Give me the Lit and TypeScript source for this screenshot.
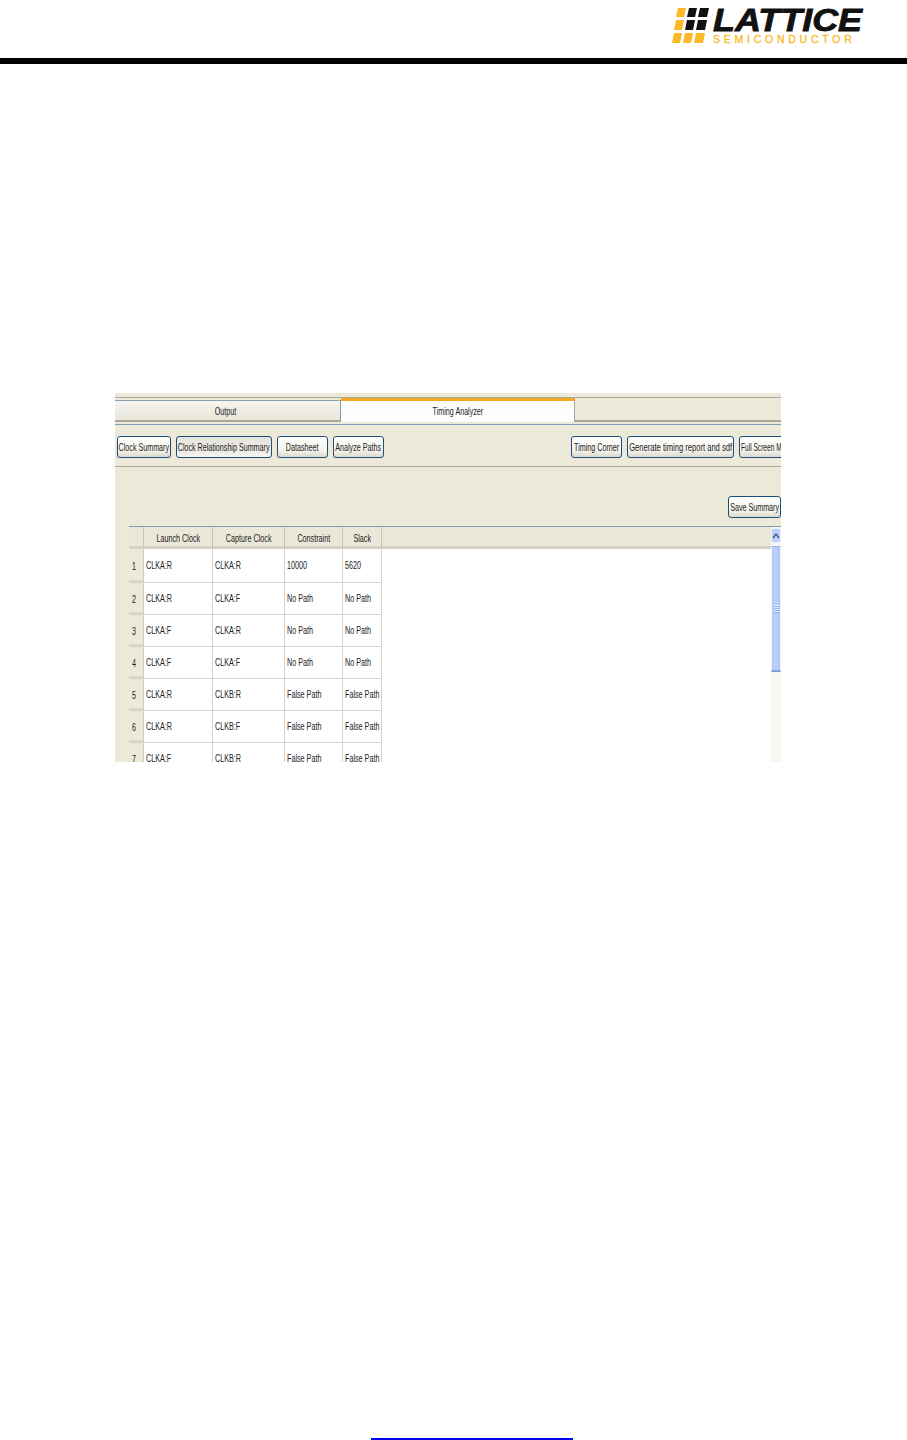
import { LitElement, html, css } from "lit";
import { customElement } from "lit/decorators.js";

const ROWS = [
  ["1", "CLKA:R", "CLKA:R", "10000", "5620"],
  ["2", "CLKA:R", "CLKA:F", "No Path", "No Path"],
  ["3", "CLKA:F", "CLKA:R", "No Path", "No Path"],
  ["4", "CLKA:F", "CLKA:F", "No Path", "No Path"],
  ["5", "CLKA:R", "CLKB:R", "False Path", "False Path"],
  ["6", "CLKA:R", "CLKB:F", "False Path", "False Path"],
  ["7", "CLKA:F", "CLKB:R", "False Path", "False Path"],
];

@customElement("app-root")
export class AppRoot extends LitElement {
  static styles = css`
    :host { display: block; width: 907px; height: 1440px; background: #fff; overflow: hidden; position: relative; font-family: "Liberation Sans", Arial, sans-serif; color: #222; }
    .header { height: 58px; display: flex; justify-content: flex-end; box-sizing: border-box; padding: 7px 35px 0 0; }
    .logo { width: 200px; height: 38px; display: block; }
    .rule { height: 6px; background: #000; }
    .panel { margin: 329px 0 0 115px; width: 666px; height: 369px; background: #ece9d8; overflow: hidden; display: flex; flex-direction: column; }
    .sq { display: inline-block; white-space: nowrap; transform: scaleX(0.65); }
    .tabs { margin-top: 4px; height: 28px; flex: none; box-sizing: border-box; border-top: 1px solid #aca899; border-bottom: 1px solid #7f9db9; display: flex; }
    .tab { display: flex; align-items: center; justify-content: center; font-size: 11px; box-sizing: border-box; }
    .tab.off { width: 226px; height: 22px; margin-top: 2px; padding-right: 4px; background: linear-gradient(#f6f5f0, #e8e6da); border-top: 1px solid #8aa0ae; border-right: 1px solid #8a9a9a; border-bottom: 2px solid #aca899; }
    .tab.on { width: 234px; height: 24px; background: #fdfdfd; border-top: 3px solid #f5a623; border-right: 1px solid #aca899; padding-bottom: 2px; }
    .tab.fill { flex: 1; height: 24px; border-bottom: 2px solid #aca899; }
    .tools { height: 42px; box-sizing: border-box; border-bottom: 1px solid #aca899; display: flex; align-items: center; padding: 2px 0 0 2px; gap: 5px; flex: none; }
    .spacer { flex: 1; }
    .btn { height: 22px; flex: none; box-sizing: border-box; border: 1px solid #1c4f80; border-radius: 3px; background: linear-gradient(#fff, #f3f2ea 70%, #dcd8cc); display: flex; align-items: center; justify-content: center; font-size: 11px; }
    .btn.act { background: linear-gradient(#e6e4dc, #ecebe5 70%, #f4f3ee); }
    .w54 { width: 54px; }
    .w96 { width: 96px; }
    .w51 { width: 51px; }
    .w53 { width: 53px; }
    .w107 { width: 107px; }
    .w107 .sq { transform: scaleX(0.69); }
    .clip { width: 48px; margin-right: -6px; justify-content: flex-start; }
    .clip .sq { transform-origin: left center; transform: scaleX(0.6); margin-left: 1px; }
    .save { display: flex; justify-content: flex-end; padding-top: 29px; height: 59px; box-sizing: border-box; flex: none; }
    .tablewrap { flex: 1; min-height: 0; margin-left: 14px; border-top: 1px solid #7f9db9; display: flex; overflow: hidden; }
    .table { flex: 1; display: grid; grid-template-columns: 15px 69px 72px 58px 39px 1fr; grid-auto-rows: 32px; grid-template-rows: 22px 34px; background: #fff; overflow: hidden; font-size: 10px; align-content: start; }
    .th { background: #ebe8d9; border-bottom: 3px solid #d6d2c2; border-right: 1px solid #c8c5b4; display: flex; align-items: center; justify-content: center; box-sizing: border-box; padding-top: 3px; }
    .th .sq { transform: scaleX(0.72); }
    .th.last { border-right: 0; }
    .rh { background: #ece9d8; border-right: 1px solid #cfccbb; border-bottom: 3px solid #d8d5c6; box-sizing: border-box; display: flex; align-items: center; padding: 3px 0 0 3px; font-size: 10px; }
    .td { border-right: 1px solid #d6d3c8; border-bottom: 1px solid #d6d3c8; box-sizing: border-box; display: flex; align-items: center; padding-left: 2px; }
    .td .sq, .rh .sq { transform-origin: left center; transform: scaleX(0.72); }
    .blank { background: #fff; }
    .scroll { width: 10px; flex: none; background: #f8f7f2; display: flex; flex-direction: column; gap: 3px; padding-top: 1px; }
    .sb-up { height: 15px; flex: none; background: #bcd0fb; border: 1px solid #eef3ff; box-sizing: border-box; border-radius: 2px; display: flex; align-items: center; justify-content: center; }
    .thumb { height: 126px; flex: none; background: linear-gradient(90deg, #b6cbf9, #bdd0fb 50%, #aec4f4); border: 1px solid #eef3ff; border-top-color: #9db7e8; border-bottom: 2px solid #7f9fdc; box-sizing: border-box; display: flex; align-items: center; justify-content: center; }
    .grip { width: 5px; height: 8px; background: repeating-linear-gradient(#e4ecff 0 1px, #93aeea 1px 2px); }
    .link { position: absolute; left: 371px; top: 1438px; width: 202px; height: 2px; background: #0000f0; }
  `;

  render() {
    return html`
      <div class="header">
        <svg class="logo" viewBox="0 0 200 38" xmlns="http://www.w3.org/2000/svg">
          <g>
            <polygon points="6,1 14,1 12,10 4,10" fill="#fdb827"/>
            <polygon points="17,1 25,1 23,10 15,10" fill="#111"/>
            <polygon points="28,1 37,1 35,10 26,10" fill="#111"/>
            <polygon points="4,13 12,13 10,23 2,23" fill="#fdb827"/>
            <polygon points="15,13 23,13 21,23 13,23" fill="#111"/>
            <polygon points="26,13 35,13 33,23 24,23" fill="#111"/>
            <polygon points="2,26 10,26 8,36 0,36" fill="#fdb827"/>
            <polygon points="13,26 21,26 19,36 11,36" fill="#fdb827"/>
            <polygon points="24,26 33,26 31,36 22,36" fill="#fdb827"/>
          </g>
          <text transform="translate(41 23.5) scale(1.16 1)" font-family="Liberation Sans" font-weight="700" font-style="italic" font-size="31" fill="#111" stroke="#111" stroke-width="0.8">LATTICE</text>
          <text x="41" y="36" font-family="Liberation Sans" font-size="10.5" fill="#fdb827" stroke="#fdb827" stroke-width="0.3" letter-spacing="3.75">SEMICONDUCTOR</text>
        </svg>
      </div>
      <div class="rule"></div>
      <div class="panel">
        <div class="tabs">
          <div class="tab off"><span class="sq">Output</span></div>
          <div class="tab on"><span class="sq">Timing Analyzer</span></div>
          <div class="tab fill"></div>
        </div>
        <div class="tools">
          <div class="btn w54"><span class="sq">Clock Summary</span></div>
          <div class="btn act w96"><span class="sq">Clock Relationship Summary</span></div>
          <div class="btn w51"><span class="sq">Datasheet</span></div>
          <div class="btn w51"><span class="sq">Analyze Paths</span></div>
          <div class="spacer"></div>
          <div class="btn w51"><span class="sq">Timing Corner</span></div>
          <div class="btn w107"><span class="sq">Generate timing report and sdf</span></div>
          <div class="btn clip"><span class="sq">Full Screen Mode</span></div>
        </div>
        <div class="save"><div class="btn w53"><span class="sq">Save Summary</span></div></div>
        <div class="tablewrap">
          <div class="table">
            <div class="th"></div>
            <div class="th"><span class="sq">Launch Clock</span></div>
            <div class="th"><span class="sq">Capture Clock</span></div>
            <div class="th"><span class="sq">Constraint</span></div>
            <div class="th"><span class="sq">Slack</span></div>
            <div class="th last"></div>
            ${ROWS.map(
              (r) => html`
                <div class="rh"><span class="sq">${r[0]}</span></div>
                ${r.slice(1).map((c) => html`<div class="td"><span class="sq">${c}</span></div>`)}
                <div class="blank"></div>
              `
            )}
          </div>
          <div class="scroll">
            <div class="sb-up">
              <svg width="8" height="7" viewBox="0 0 8 7"><path d="M1 6 L4 2 L7 6" fill="none" stroke="#4d6185" stroke-width="1.6"/></svg>
            </div>
            <div class="thumb"><div class="grip"></div></div>
          </div>
        </div>
      </div>
      <div class="link"></div>
    `;
  }
}
